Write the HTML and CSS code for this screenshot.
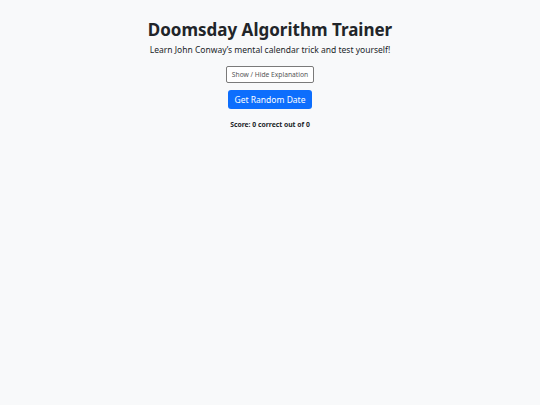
FILE: index.html
```html
<!DOCTYPE html>
<html>
<head>
<meta charset="utf-8">
<link rel="stylesheet" href="styles.css">
</head>
<body>
<div class="app">
  <h1 class="title">Doomsday Algorithm Trainer</h1>
  <p class="subtitle">Learn John Conway’s mental calendar trick and test yourself!</p>
  <button class="toggle">Show / Hide Explanation</button>
  <button class="primary">Get Random Date</button>
  <div class="score">Score: 0 correct out of 0</div>
</div>
</body>
</html>
```
FILE: styles.css
```css
html, body { margin: 0; padding: 0; }
body {
  background: #f8f9fa;
  font-family: "Noto Sans", "Open Sans", sans-serif;
  color: #212529;
  width: 540px;
  height: 405px;
}
.app {
  display: flex;
  flex-direction: column;
  align-items: center;
  padding-top: 19px;
}
.title {
  margin: 0;
  font-size: 17px;
  font-weight: 700;
  line-height: 22px;
}
.subtitle {
  margin: 3px 0 0;
  font-size: 8.5px;
  line-height: 12px;
}
.toggle {
  margin-top: 10px;
  font-family: inherit;
  font-size: 6.7px;
  color: #555;
  background: #fff;
  border: 1px solid #7a7a7a;
  border-radius: 2px;
  padding: 0 4px;
  height: 17px;
  white-space: nowrap;
  min-width: 88px;
}
.primary {
  margin-top: 7px;
  font-family: inherit;
  font-size: 8.5px;
  color: #fff;
  background: #0d6efd;
  border: none;
  border-radius: 3px;
  height: 19px;
  min-width: 84px;
  padding: 0 6px;
  white-space: nowrap;
}
.score {
  margin-top: 11px;
  font-size: 6.8px;
  font-weight: 700;
  line-height: 10px;
}
```
